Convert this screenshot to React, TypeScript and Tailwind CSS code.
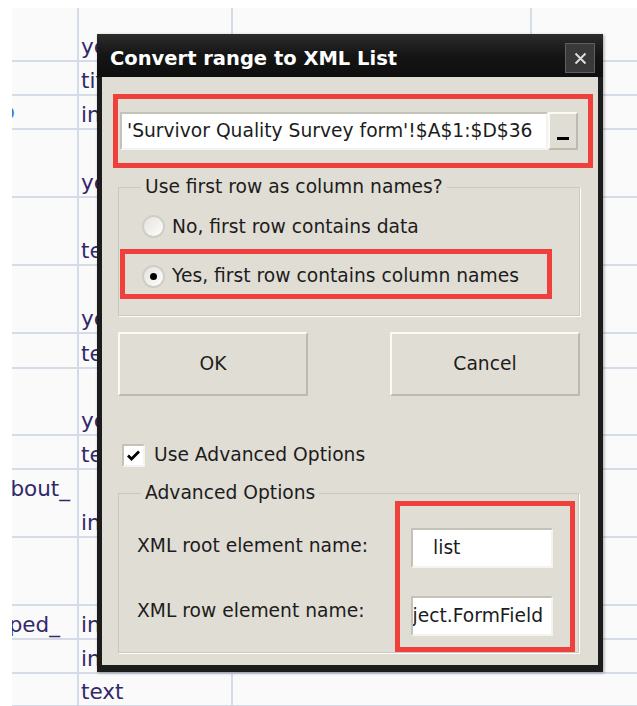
import React from 'react';

type Row = { h: string; a?: string; aClass?: string; b?: string };

// spreadsheet rows behind the dialog (heights include the 2px grid line)
const rows: Row[] = [
  { h: 'h-[54px]', b: 'yes/no' },
  { h: 'h-[34px]', b: 'title' },
  { h: 'h-[34px]', a: 'info', aClass: 'items-end pb-[4px] pr-[62px] text-[#3c7bd6]', b: 'integer' },
  { h: 'h-[68px]', b: 'yes/no' },
  { h: 'h-[68px]', b: 'text' },
  { h: 'h-[68px]', b: 'yes/no' },
  { h: 'h-[35px]', b: 'text' },
  { h: 'h-[67px]', b: 'yes/no' },
  { h: 'h-[34px]', b: 'text' },
  { h: 'h-[68px]', a: 'about_', aClass: 'items-start pt-[6px] pr-[7px] text-[#32296a]', b: 'integer' },
  { h: 'h-[68px]' },
  { h: 'h-[34px]', a: 'typed_', aClass: 'items-end pb-[1px] pr-[17px] text-[#32296a]', b: 'integer' },
  { h: 'h-[34px]', b: 'integer' },
  { h: 'h-[33px]', b: 'text' },
];

const cellText = "font-['DejaVu_Sans',Verdana,sans-serif] text-[21.5px] leading-[25px] whitespace-nowrap";
const sunken = 'border-2 border-t-[#c4c1b7] border-l-[#c4c1b7] border-b-[#f4f3ef] border-r-[#f4f3ef] bg-white';
const raised = 'border-2 border-t-[#fbfaf7] border-l-[#fbfaf7] border-b-[#bdbab0] border-r-[#bdbab0] bg-[#e0ddd5]';

function Radio({ checked }: { checked?: boolean }) {
  return (
    <span className="flex h-[23px] w-[23px] flex-none items-center justify-center rounded-full border-2 border-[#d0cdc4] bg-gradient-to-br from-[#e4e2dc] to-white">
      {checked && <span className="h-[7px] w-[7px] rounded-full bg-black" />}
    </span>
  );
}

export default function App() {
  return (
    <div className="relative h-[706px] w-[637px] overflow-hidden bg-white">
      <div className="h-[8px]" />
      <div className="flex">
        <div className="w-[12px] flex-none" />
        <div className="flex-1 bg-[#fafafa]">
          {rows.map((r, i) => (
            <div key={i} className={`flex border-b-2 border-[#d5dce8] ${r.h}`}>
              <div className={`flex w-[67px] flex-none justify-end overflow-hidden border-r-2 border-[#d5dce8] ${cellText} ${r.aClass ?? ''}`}>
                {r.a}
              </div>
              <div className={`flex w-[154px] flex-none items-end overflow-hidden border-r-2 border-[#d5dce8] pb-[1px] pl-[2px] text-[#32296a] ${cellText}`}>
                {r.b}
              </div>
              {i === 0 && <div className="w-[299px] flex-none border-r-2 border-[#d5dce8]" />}
              <div className="flex-1" />
            </div>
          ))}
        </div>
      </div>

      {/* Convert range to XML List dialog */}
      <div className="absolute left-[97px] top-[34px] flex h-[638px] w-[506px] flex-col bg-[#1c1c1c] px-[5px] pb-[7px] shadow-[1px_1px_3px_rgba(0,0,0,0.35)]">
        <div className="-mx-[5px] flex h-[43px] flex-none items-start justify-between bg-gradient-to-b from-[#2c2c2c] via-[#151515] to-[#0e0e0e] pl-[13px] pr-[8px]">
          <span className="pt-[15px] font-['DejaVu_Sans',sans-serif] text-[19.5px] font-bold leading-[20px] text-white">
            Convert range to XML List
          </span>
          <button className="mt-[9px] flex h-[30px] w-[30px] items-center justify-center border border-[#5f5f5f] bg-[#393939]">
            <svg width="13" height="13" viewBox="0 0 13 13">
              <path d="M1.5 1.5 L11.5 11.5 M11.5 1.5 L1.5 11.5" stroke="#dcdcdc" strokeWidth="2" />
            </svg>
          </button>
        </div>

        <div className="flex flex-1 flex-col bg-[#e0ddd5] pt-[17px] font-['DejaVu_Sans',Verdana,sans-serif] text-[18.7px] leading-[22px] text-[#1c1c1c]">
          <div className="ml-[11px] flex h-[74px] w-[480px] items-start border-[5px] border-[#f0403c] pl-[2px] pt-[13px]">
            <div className={`flex h-[38px] w-[428px] items-center overflow-hidden whitespace-nowrap pl-[5px] ${sunken}`}>
              'Survivor Quality Survey form'!$A$1:$D$36
            </div>
            <button className={`flex h-[38px] w-[30px] items-end justify-center pb-[8px] ${raised}`}>
              <span className="h-[3px] w-[12px] bg-black" />
            </button>
          </div>

          <fieldset className="ml-[16px] mt-[8px] w-[462px] border border-[#cbc8bf] pb-[16px] shadow-[1px_1px_0_#fff]">
            <legend className="ml-[22px] px-[4px]">Use first row as column names?</legend>
            <label className="ml-[23px] mt-[17px] flex items-center gap-[7px]">
              <Radio />
              No, first row contains data
            </label>
            <div className="ml-[1px] mt-[11px] flex h-[50px] w-[432px] items-center gap-[7px] border-[5px] border-[#f0403c] pl-[17px] pt-[4px]">
              <Radio checked />
              Yes, first row contains column names
            </div>
          </fieldset>

          <div className="ml-[16px] mt-[16px] flex w-[462px] justify-between">
            <button className={`h-[64px] w-[190px] ${raised}`}>OK</button>
            <button className={`h-[64px] w-[190px] ${raised}`}>Cancel</button>
          </div>

          <label className="ml-[20px] mt-[48px] flex h-[22px] items-center gap-[9px]">
            <span className={`flex h-[23px] w-[23px] flex-none items-center justify-center ${sunken}`}>
              <svg width="15" height="15" viewBox="0 0 15 15">
                <path d="M2 7.5 L5.5 11 L13 3.5" fill="none" stroke="#000" strokeWidth="2.8" />
              </svg>
            </span>
            Use Advanced Options
          </label>

          <fieldset className="ml-[16px] mt-[16px] w-[461px] border border-[#cbc8bf] shadow-[1px_1px_0_#fff]">
            <legend className="ml-[22px] px-[4px]">Advanced Options</legend>
            <div className="flex items-start">
              <div className="flex w-[276px] flex-none flex-col pl-[18px]">
                <span className="mt-[31px]">XML root element name:</span>
                <span className="mt-[43px]">XML row element name:</span>
              </div>
              <div className="-mt-[3px] flex h-[151px] w-[180px] flex-none flex-col border-[5px] border-[#f0403c] pl-[11px]">
                <div className={`mt-[22px] flex h-[40px] w-[142px] items-center pl-[20px] ${sunken}`}>list</div>
                <div className={`mt-[28px] flex h-[40px] w-[142px] items-center justify-end overflow-hidden whitespace-nowrap pr-[8px] ${sunken}`}>
                  Object.FormField
                </div>
              </div>
            </div>
          </fieldset>
        </div>
      </div>
    </div>
  );
}
